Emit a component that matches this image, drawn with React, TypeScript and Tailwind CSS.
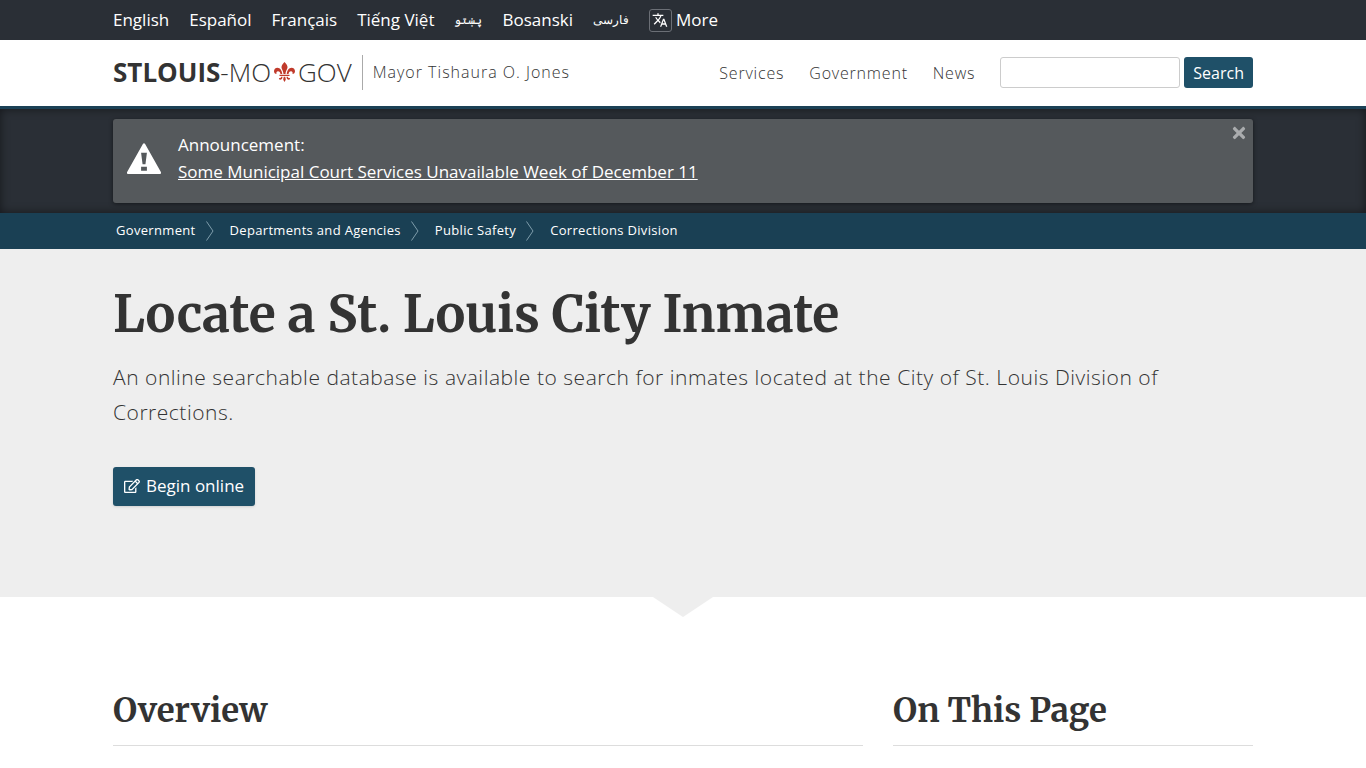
import type { ReactNode } from 'react';
import { FaRegEdit, FaTimes } from 'react-icons/fa';
import { MdTranslate } from 'react-icons/md';

const languages = [
  { label: 'English', lang: 'en' },
  { label: 'Español', lang: 'es' },
  { label: 'Français', lang: 'fr' },
  { label: 'Tiếng Việt', lang: 'vi' },
  { label: 'پښتو', lang: 'ps', small: true },
  { label: 'Bosanski', lang: 'bs' },
  { label: 'فارسی', lang: 'fa', small: true },
];

const mainNav = ['Services', 'Government', 'News'];

const breadcrumbs = ['Government', 'Departments and Agencies', 'Public Safety', 'Corrections Division'];

const Container = ({ children, className = '' }: { children: ReactNode; className?: string }) => (
  <div className={`mx-auto w-full max-w-[1172px] px-4 ${className}`}>{children}</div>
);

const FleurDeLis = () => (
  <svg viewBox="0 0 42 40" className="mx-[3px] h-5 w-[21px] shrink-0 fill-[#c03a2b]" aria-hidden="true">
    <path d="M21 0c4 4 6 7 6 10.500c0 4-3.500 6-4 13.500h-4c-.5-7.500-4-9.500-4-13.500C15 7 17 4 21 0z" />
    <path d="M16.500 24C16 17 12 11.500 7 11.500C2.500 11.500 0 15 0 18.500c0 3 2 5.500 5 5.500c-1-3 .5-5.500 3-5.500c3 0 4.500 2.500 5 5.500z" />
    <path d="M25.500 24C26 17 30 11.500 35 11.500c4.500 0 7 3.500 7 7c0 3-2 5.500-5 5.500c1-3-.5-5.500-3-5.500c-3 0-4.500 2.500-5 5.500z" />
    <path d="M11 25.500h20v2.500H11z" />
    <path d="M19.500 29.500h3c0 3 2 4.500 .5 7L21 40l-2-3.500c-1.500-2.500 .5-4 .5-7z" />
    <path d="M17 29.500c0 4-2 6-4.500 6c-2 0-3-1.500-2.500-3.500c2.500 1 4-.5 4.500-2.500zM25 29.500c0 4 2 6 4.500 6c2 0 3-1.500 2.500-3.500c-2.500 1-4-.5-4.500-2.500z" />
  </svg>
);

const WarningIcon = () => (
  <svg viewBox="0 0 36 33" className="mt-6 h-8 w-9 shrink-0 fill-white" aria-hidden="true">
    <path
      fillRule="evenodd"
      d="M17 .8Q18 -.4 19 .8L35.400 30Q36 32 34.500 32H1.500Q0 32 .6 30zM15 10L16.500 22H19.500L21 10zM15 24.500V28.500H21V24.500z"
    />
  </svg>
);

const CrumbArrow = () => (
  <svg viewBox="0 0 8 20" className="h-5 w-2 fill-none stroke-[#7f9dab]" aria-hidden="true">
    <path d="M.5 .5L7 10L.5 19.500" />
  </svg>
);

const LanguageBar = () => (
  <div className="bg-[#2a2f36] text-white">
    <Container className="flex min-h-10 flex-wrap items-center gap-x-5 text-[17px] font-medium">
      {languages.map((l) => (
        <a key={l.lang} href={`#${l.lang}`} lang={l.lang} className={l.small ? 'text-xs font-normal' : ''}>
          {l.label}
        </a>
      ))}
      <a href="#languages" className="flex items-center gap-1">
        <span className="flex size-[23px] items-center justify-center rounded-[3px] border border-[#6b6f76]">
          <MdTranslate size={16} />
        </span>
        More
      </a>
    </Container>
  </div>
);

const Header = () => (
  <header className="border-b-3 border-[#1b4156] bg-white">
    <Container className="flex min-h-[66px] flex-wrap items-center justify-between">
      <div className="flex items-center pb-0.5">
        <a href="#home" className="flex items-center text-[26px] font-light">
          <b className="font-bold">STLOUIS</b>-MO
          <FleurDeLis />
          GOV
        </a>
        <a
          href="#mayor"
          className="ml-2.5 flex h-[35px] items-center border-l border-[#aaa] pl-2.5 font-light tracking-[1px]"
        >
          Mayor Tishaura O. Jones
        </a>
      </div>
      <div className="flex items-center">
        <nav className="mr-[25px] flex gap-[25px] font-light tracking-wider">
          {mainNav.map((item) => (
            <a key={item} href={`#${item.toLowerCase()}`}>
              {item}
            </a>
          ))}
        </nav>
        <form className="flex gap-1 pb-px">
          <input
            type="text"
            aria-label="Search"
            className="h-[31px] w-[180px] rounded-[3px] border border-[#ccc] px-2"
          />
          <button type="submit" className="h-[31px] rounded-[3px] bg-[#1f5068] px-[9px] text-white">
            Search
          </button>
        </form>
      </div>
    </Container>
  </header>
);

const Announcement = () => (
  <section className="bg-[#2a2f36] py-2.5 text-white shadow-[inset_0_0_10px_rgba(0,0,0,0.5)]">
    <Container>
      <div className="flex min-h-[84px] rounded-[3px] bg-[#55595c] pr-[5px] pl-[13px] shadow-[0_1px_4px_rgba(0,0,0,0.5)]">
        <WarningIcon />
        <div className="grow pt-3 pl-4 text-[17px] leading-[27px]">
          <p>Announcement:</p>
          <a href="#announcement" className="underline">
            Some Municipal Court Services Unavailable Week of December 11
          </a>
        </div>
        <button type="button" aria-label="Close announcement" className="mt-[5px] self-start text-[#aaacae]">
          <FaTimes size={18} />
        </button>
      </div>
    </Container>
  </section>
);

const Breadcrumbs = () => (
  <nav aria-label="Breadcrumb" className="bg-[#1a4054] text-white">
    <Container>
      <ol className="flex min-h-9 flex-wrap items-center gap-x-4 pl-[3px] text-[13px] tracking-wide">
        {breadcrumbs.map((crumb, i) => (
          <li key={crumb} className="flex items-center gap-2.5">
            <a href="#breadcrumb">{crumb}</a>
            {i < breadcrumbs.length - 1 && <CrumbArrow />}
          </li>
        ))}
      </ol>
    </Container>
  </nav>
);

const Hero = () => (
  <section>
    <div className="bg-[#eee] pt-8 pb-[91px]">
      <Container>
        <h1 className="font-['Merriweather',serif] text-[50px] leading-[68px] font-bold">
          Locate a St. Louis City Inmate
        </h1>
        <p className="mt-[11px] text-[21px] leading-[35px] font-light tracking-wide">
          An online searchable database is available to search for inmates located at the City of St. Louis Division of
          Corrections.
        </p>
        <a
          href="#begin"
          className="mt-[37px] inline-flex h-[39px] items-center gap-1.5 rounded-[3px] bg-[#1f5068] px-[11px] pb-0.5 text-[17px] text-white shadow"
        >
          <FaRegEdit size={16} />
          Begin online
        </a>
      </Container>
    </div>
    <svg viewBox="0 0 60 20" className="mx-auto h-5 w-15 fill-[#eee]" aria-hidden="true">
      <path d="M0 0h60L30 20z" />
    </svg>
  </section>
);

const SectionTitle = ({ children }: { children: ReactNode }) => (
  <h2 className="border-b border-[#ddd] pb-3 font-['Merriweather',serif] text-[33px] leading-[44px] font-bold">
    {children}
  </h2>
);

export default function App() {
  return (
    <div className="bg-white font-['Open_Sans','Noto_Sans',sans-serif] text-base text-[#333]">
      <LanguageBar />
      <Header />
      <Announcement />
      <Breadcrumbs />
      <main>
        <Hero />
        <Container className="grid grid-cols-1 gap-x-[30px] pt-[72px] pb-5 md:grid-cols-[25fr_12fr]">
          <SectionTitle>Overview</SectionTitle>
          <SectionTitle>On This Page</SectionTitle>
        </Container>
      </main>
    </div>
  );
}
